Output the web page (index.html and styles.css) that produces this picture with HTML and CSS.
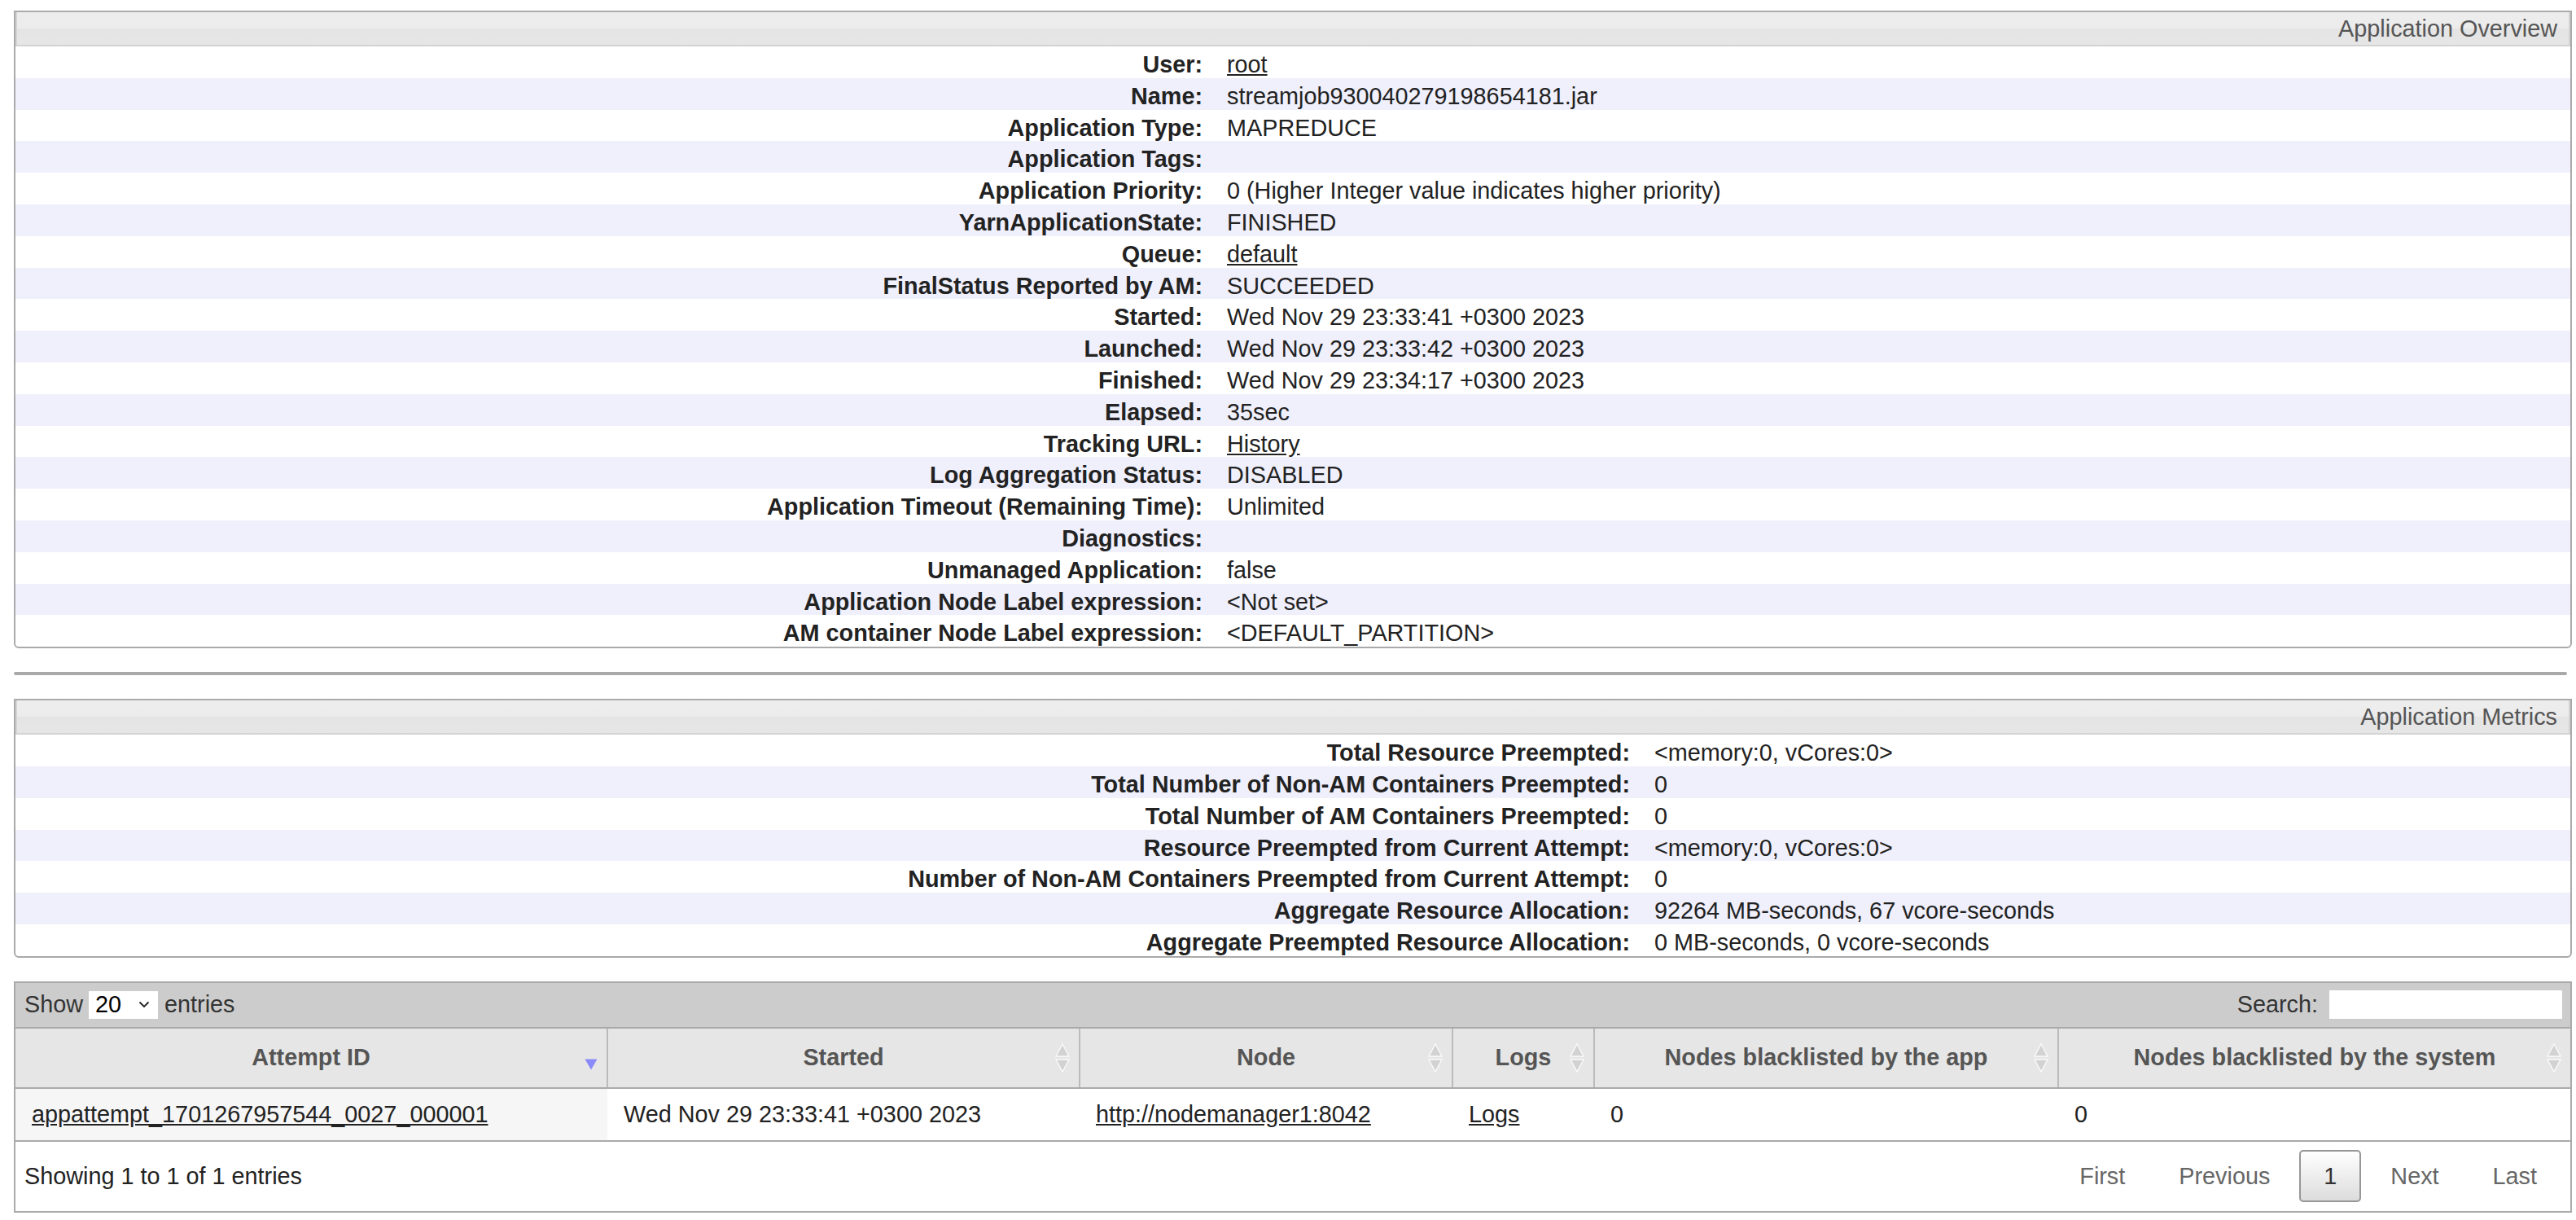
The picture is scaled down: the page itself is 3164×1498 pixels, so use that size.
FILE: index.html
```html
<!DOCTYPE html>
<html>
<head>
<meta charset="utf-8">
<title>Application Overview</title>
<link rel="stylesheet" href="styles.css">
</head>
<body>
<div class="page">
  <section class="info-box">
    <div class="info-head">Application Overview</div>
    <div class="info-rows info-rows--overview">
      <div class="info-row"><div class="info-label">User:</div><div class="info-value"><a href="#">root</a></div></div>
      <div class="info-row"><div class="info-label">Name:</div><div class="info-value">streamjob930040279198654181.jar</div></div>
      <div class="info-row"><div class="info-label">Application Type:</div><div class="info-value">MAPREDUCE</div></div>
      <div class="info-row"><div class="info-label">Application Tags:</div><div class="info-value"></div></div>
      <div class="info-row"><div class="info-label">Application Priority:</div><div class="info-value">0 (Higher Integer value indicates higher priority)</div></div>
      <div class="info-row"><div class="info-label">YarnApplicationState:</div><div class="info-value">FINISHED</div></div>
      <div class="info-row"><div class="info-label">Queue:</div><div class="info-value"><a href="#">default</a></div></div>
      <div class="info-row"><div class="info-label">FinalStatus Reported by AM:</div><div class="info-value">SUCCEEDED</div></div>
      <div class="info-row"><div class="info-label">Started:</div><div class="info-value">Wed Nov 29 23:33:41 +0300 2023</div></div>
      <div class="info-row"><div class="info-label">Launched:</div><div class="info-value">Wed Nov 29 23:33:42 +0300 2023</div></div>
      <div class="info-row"><div class="info-label">Finished:</div><div class="info-value">Wed Nov 29 23:34:17 +0300 2023</div></div>
      <div class="info-row"><div class="info-label">Elapsed:</div><div class="info-value">35sec</div></div>
      <div class="info-row"><div class="info-label">Tracking URL:</div><div class="info-value"><a href="#">History</a></div></div>
      <div class="info-row"><div class="info-label">Log Aggregation Status:</div><div class="info-value">DISABLED</div></div>
      <div class="info-row"><div class="info-label">Application Timeout (Remaining Time):</div><div class="info-value">Unlimited</div></div>
      <div class="info-row"><div class="info-label">Diagnostics:</div><div class="info-value"></div></div>
      <div class="info-row"><div class="info-label">Unmanaged Application:</div><div class="info-value">false</div></div>
      <div class="info-row"><div class="info-label">Application Node Label expression:</div><div class="info-value">&lt;Not set&gt;</div></div>
      <div class="info-row"><div class="info-label">AM container Node Label expression:</div><div class="info-value">&lt;DEFAULT_PARTITION&gt;</div></div>
    </div>
  </section>

  <div class="rule"></div>

  <section class="info-box">
    <div class="info-head">Application Metrics</div>
    <div class="info-rows info-rows--metrics">
      <div class="info-row"><div class="info-label">Total Resource Preempted:</div><div class="info-value">&lt;memory:0, vCores:0&gt;</div></div>
      <div class="info-row"><div class="info-label">Total Number of Non-AM Containers Preempted:</div><div class="info-value">0</div></div>
      <div class="info-row"><div class="info-label">Total Number of AM Containers Preempted:</div><div class="info-value">0</div></div>
      <div class="info-row"><div class="info-label">Resource Preempted from Current Attempt:</div><div class="info-value">&lt;memory:0, vCores:0&gt;</div></div>
      <div class="info-row"><div class="info-label">Number of Non-AM Containers Preempted from Current Attempt:</div><div class="info-value">0</div></div>
      <div class="info-row"><div class="info-label">Aggregate Resource Allocation:</div><div class="info-value">92264 MB-seconds, 67 vcore-seconds</div></div>
      <div class="info-row"><div class="info-label">Aggregate Preempted Resource Allocation:</div><div class="info-value">0 MB-seconds, 0 vcore-seconds</div></div>
    </div>
  </section>

  <section class="dt">
    <div class="dt-toolbar">
      <div class="dt-length">
        <span>Show</span>
        <span class="dt-select"><span class="dt-select-val">20</span>
          <svg class="dt-chev" width="14" height="9" viewBox="0 0 14 9"><path d="M1.5 1.5 L7 7 L12.5 1.5" fill="none" stroke="#222" stroke-width="1.8"/></svg>
        </span>
        <span>entries</span>
      </div>
      <div class="dt-search">
        <span>Search:</span>
        <span class="dt-input"></span>
      </div>
    </div>
    <table class="dt-table">
      <colgroup>
        <col class="c1"><col class="c2"><col class="c3"><col class="c4"><col class="c5"><col class="c6">
      </colgroup>
      <thead>
        <tr>
          <th>Attempt ID
            <svg class="sort sort-desc" width="16" height="14" viewBox="0 0 16 14"><path d="M0.5 0.5 H15.5 L8 13.5 Z" fill="#8a8afa"/></svg>
          </th>
          <th>Started
            <svg class="sort sort-both" width="18" height="36" viewBox="0 0 18 36"><path d="M9 1 L17 16 H1 Z" fill="#d2d2d2" stroke="#fafafa" stroke-width="1.4"/><path d="M1 20 H17 L9 35 Z" fill="#d2d2d2" stroke="#fafafa" stroke-width="1.4"/></svg>
          </th>
          <th>Node
            <svg class="sort sort-both" width="18" height="36" viewBox="0 0 18 36"><path d="M9 1 L17 16 H1 Z" fill="#d2d2d2" stroke="#fafafa" stroke-width="1.4"/><path d="M1 20 H17 L9 35 Z" fill="#d2d2d2" stroke="#fafafa" stroke-width="1.4"/></svg>
          </th>
          <th>Logs
            <svg class="sort sort-both" width="18" height="36" viewBox="0 0 18 36"><path d="M9 1 L17 16 H1 Z" fill="#d2d2d2" stroke="#fafafa" stroke-width="1.4"/><path d="M1 20 H17 L9 35 Z" fill="#d2d2d2" stroke="#fafafa" stroke-width="1.4"/></svg>
          </th>
          <th>Nodes blacklisted by the app
            <svg class="sort sort-both" width="18" height="36" viewBox="0 0 18 36"><path d="M9 1 L17 16 H1 Z" fill="#d2d2d2" stroke="#fafafa" stroke-width="1.4"/><path d="M1 20 H17 L9 35 Z" fill="#d2d2d2" stroke="#fafafa" stroke-width="1.4"/></svg>
          </th>
          <th>Nodes blacklisted by the system
            <svg class="sort sort-both" width="18" height="36" viewBox="0 0 18 36"><path d="M9 1 L17 16 H1 Z" fill="#d2d2d2" stroke="#fafafa" stroke-width="1.4"/><path d="M1 20 H17 L9 35 Z" fill="#d2d2d2" stroke="#fafafa" stroke-width="1.4"/></svg>
          </th>
        </tr>
      </thead>
      <tbody>
        <tr>
          <td class="sorted"><a href="#">appattempt_1701267957544_0027_000001</a></td>
          <td>Wed Nov 29 23:33:41 +0300 2023</td>
          <td><a href="#">http://nodemanager1:8042</a></td>
          <td><a href="#">Logs</a></td>
          <td>0</td>
          <td>0</td>
        </tr>
      </tbody>
    </table>
    <div class="dt-footer">
      <div class="dt-info">Showing 1 to 1 of 1 entries</div>
      <div class="dt-paging">
        <span class="pg-btn">First</span>
        <span class="pg-btn">Previous</span>
        <span class="pg-btn pg-current">1</span>
        <span class="pg-btn">Next</span>
        <span class="pg-btn">Last</span>
      </div>
    </div>
  </section>
</div>
</body>
</html>
```

FILE: styles.css
```css
* { box-sizing: border-box; }

html, body {
  margin: 0;
  padding: 0;
  background: #fff;
}

body {
  font-family: "Liberation Sans", Arial, Helvetica, sans-serif;
  font-size: 28.8px;
  color: #222;
}

a { color: #222; text-decoration: underline; }

.page {
  margin-left: 17px;
  width: 3142px;
  padding-top: 13px;
  display: flex;
  flex-direction: column;
  gap: 29px;
}

/* info boxes */
.info-box {
  border: 2px solid #aaa;
  border-radius: 0 0 6px 6px;
  overflow: hidden;
}

.info-head {
  height: 42px;
  border: 2px solid #d3d3d3;
  border-top: 0;
  background: linear-gradient(#ededed 0, #ececec 50%, #e4e4e4 50%, #e6e6e6 100%);
  color: #555;
  text-align: right;
  padding-right: 14px;
  line-height: 40px;
}

.info-row {
  display: grid;
  height: 38.8px;
}
.info-row:nth-child(even) { background: #f0f0fc; }

.info-rows--overview .info-row { grid-template-columns: 1472px 1fr; }
.info-rows--metrics .info-row { grid-template-columns: 1997px 1fr; }

.info-label,
.info-value {
  padding-top: 6px;
  line-height: 32.8px;
  white-space: nowrap;
}
.info-label {
  font-weight: bold;
  text-align: right;
  padding-right: 14px;
}
.info-value {
  padding-left: 16px;
}

.rule {
  height: 4px;
  background: #a9a9a9;
  border-radius: 2px;
  width: 3136px;
}

/* data table */
.dt {
  border: 2px solid #aaa;
}

.dt-toolbar {
  height: 56px;
  background: #ccc;
  border-bottom: 2px solid #aaa;
  display: flex;
  align-items: center;
  justify-content: space-between;
  padding: 0 10px 0 11px;
  color: #333;
}

.dt-length, .dt-search {
  display: flex;
  align-items: center;
}

.dt-select {
  display: inline-flex;
  align-items: center;
  justify-content: space-between;
  width: 85px;
  height: 34px;
  background: #fff;
  margin: 0 8px 0 7px;
  padding: 0 10px 0 8px;
  color: #000;
}

.dt-input {
  display: inline-block;
  width: 286px;
  height: 35px;
  background: #fff;
  margin-left: 14px;
}

.dt-table {
  width: 100%;
  table-layout: fixed;
  border-collapse: collapse;
}

.c1 { width: 727px; }
.c2 { width: 580px; }
.c3 { width: 458px; }
.c4 { width: 174px; }
.c5 { width: 570px; }
.c6 { width: 629px; }

.dt-table th {
  position: relative;
  height: 73px;
  padding: 0;
  background: #e6e6e6;
  color: #555;
  font-weight: bold;
  text-align: center;
  white-space: nowrap;
  border-left: 2px solid #bbb;
  border-bottom: 2px solid #aaa;
}
.dt-table th:first-child { border-left: 0; }

.sort { position: absolute; right: 11px; }
.sort-desc { top: 37px; }
.sort-both { top: 18px; }

.dt-table td {
  height: 65px;
  padding: 0 0 0 20px;
  white-space: nowrap;
  color: #222;
  border-bottom: 2px solid #aaa;
}
.dt-table td.sorted { background: #f6f6f6; }

.dt-footer {
  height: 85px;
  display: flex;
  align-items: center;
  justify-content: space-between;
  padding: 0 11px 0 11px;
}

.dt-paging {
  display: flex;
  align-items: center;
  gap: 6px;
  color: #666;
}

.pg-btn {
  display: inline-flex;
  align-items: center;
  height: 64px;
  padding: 0 28px;
  border: 2px solid transparent;
  border-radius: 5px;
}

.pg-current {
  color: #333;
  border-color: #979797;
  background: linear-gradient(#fff 0%, #dcdcdc 100%);
}
```
